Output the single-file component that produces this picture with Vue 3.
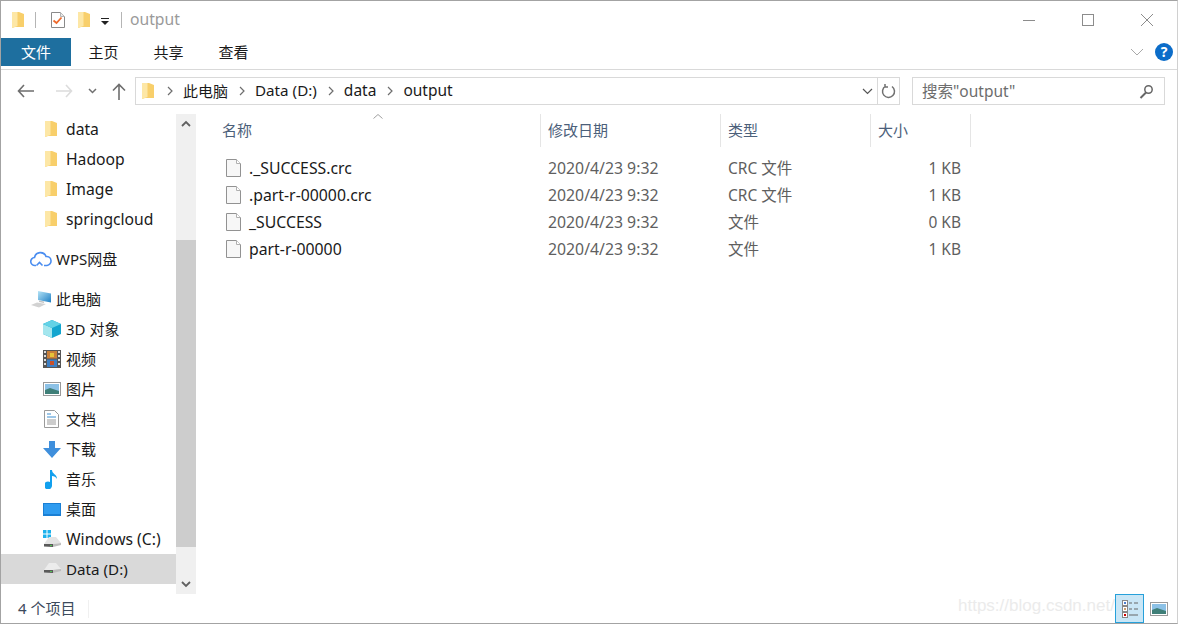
<script setup>
const navTop = ["data", "Hadoop", "Image", "springcloud"]
const places = [
  { name: "3D 对象", icon: "cube", cls: "mixed" },
  { name: "视频", icon: "film", cls: "cjk" },
  { name: "图片", icon: "picture", cls: "cjk" },
  { name: "文档", icon: "doc", cls: "cjk" },
  { name: "下载", icon: "down", cls: "cjk" },
  { name: "音乐", icon: "music", cls: "cjk" },
  { name: "桌面", icon: "desk", cls: "cjk" },
  { name: "Windows (C:)", icon: "winDrive" },
  { name: "Data (D:)", icon: "drive", selected: true, cls: "drive-name" },
]
const files = [
  { name: "._SUCCESS.crc", date: "2020/4/23 9:32", type: "CRC 文件", size: "1 KB" },
  { name: ".part-r-00000.crc", date: "2020/4/23 9:32", type: "CRC 文件", size: "1 KB" },
  { name: "_SUCCESS", date: "2020/4/23 9:32", type: "文件", size: "0 KB" },
  { name: "part-r-00000", date: "2020/4/23 9:32", type: "文件", size: "1 KB" },
]
const crumbs = ["此电脑", "Data (D:)", "data", "output"]
</script>

<template>
  <div class="window">
    <div class="titlebar">
      <svg class="folder" width="14" height="18" viewBox="0 0 14 18"><path d="M1 1h7l5 2v13H4l-3 1z" fill="#f8cf6b" /><path d="M1 1h5.500v14L1 17z" fill="#fde7a6" /></svg>
      <span class="tsep sep1"></span>
      <svg class="check" width="16" height="18" viewBox="0 0 16 18"><path d="M1.500 1.500h9l4 4v11h-13z" fill="#fff" stroke="#8a8a8a" /><path d="M10.500 1.500v4h4" fill="#e8e8e8" stroke="#b5b5b5" /><path d="M3.500 9.500l3 2.500 5-5.500" fill="none" stroke="#ee6a2c" stroke-width="1.800" /></svg>
      <svg class="folder f2" width="14" height="18" viewBox="0 0 14 18"><path d="M1 1h7l5 2v13H4l-3 1z" fill="#f8cf6b" /><path d="M1 1h5.500v14L1 17z" fill="#fde7a6" /></svg>
      <svg class="qat" width="8" height="7" viewBox="0 0 8 7"><path d="M0 0h8v1H0zM0 3h8L4 7z" fill="#222" /></svg>
      <span class="tsep sep2"></span>
      <span class="title">output</span>
      <div class="winbtns">
        <svg width="14" height="14" viewBox="0 0 14 14"><path d="M1 7.500h12" stroke="#8c8c8c" /></svg>
        <svg width="14" height="14" viewBox="0 0 14 14"><rect x="1.500" y="1.500" width="11" height="11" fill="none" stroke="#8c8c8c" /></svg>
        <svg width="14" height="14" viewBox="0 0 14 14"><path d="M1 1l12 12M13 1L1 13" stroke="#8c8c8c" /></svg>
      </div>
    </div>

    <div class="ribbon">
      <div class="tab file-tab">文件</div>
      <div class="tab">主页</div>
      <div class="tab">共享</div>
      <div class="tab">查看</div>
      <div class="ribbon-right">
        <svg width="14" height="8" viewBox="0 0 14 8"><path d="M1 1l6 6 6-6" fill="none" stroke="#a9a9a9" /></svg>
        <span class="help">?</span>
      </div>
    </div>

    <div class="addressrow">
      <div class="navbtns">
        <svg width="18" height="14" viewBox="0 0 18 14"><path d="M7 1L1.500 7 7 13M2 7h15" fill="none" stroke="#6e6e6e" stroke-width="1.600" /></svg>
        <svg width="18" height="14" viewBox="0 0 18 14"><path d="M11 1l5.500 6L11 13M16 7H1" fill="none" stroke="#dcdcdc" stroke-width="1.600" /></svg>
        <svg width="9" height="6" viewBox="0 0 9 6"><path d="M1 1l3.500 3.500L8 1" fill="none" stroke="#707070" stroke-width="1.500" /></svg>
        <svg width="14" height="17" viewBox="0 0 14 17"><path d="M1 7.500L7 1.500l6 6M7 2v15" fill="none" stroke="#6e6e6e" stroke-width="1.600" /></svg>
      </div>
      <div class="addrbox">
        <svg class="addr-folder" width="14" height="18" viewBox="0 0 14 18"><path d="M1 1h7l5 2v13H4l-3 1z" fill="#f8cf6b" /><path d="M1 1h5.500v14L1 17z" fill="#fde7a6" /></svg>
        <template v-for="(c, i) in crumbs" :key="c">
          <svg class="chev" width="6" height="10" viewBox="0 0 6 10"><path d="M1 1l4 4-4 4" fill="none" stroke="#6e6e6e" stroke-width="1.200" /></svg>
          <span class="crumb" :class="{ cjk: i === 0, 'drive-name': i === 1 }">{{ c }}</span>
        </template>
        <span class="addr-spacer"></span>
        <svg class="addr-drop" width="11" height="7" viewBox="0 0 11 7"><path d="M1 1l4.500 4.500L10 1" fill="none" stroke="#555" stroke-width="1.200" /></svg>
        <span class="refresh">
          <svg width="15" height="16" viewBox="0 0 15 16"><path d="M4.500 3.200A6 6 0 1 0 11 3.500M4 1v3h3" fill="none" stroke="#707070" stroke-width="1.500" /></svg>
        </span>
      </div>
      <div class="searchbox">
        <span class="search-text">搜索"output"</span>
        <svg width="15" height="15" viewBox="0 0 15 15"><circle cx="9.500" cy="5.500" r="3.700" fill="none" stroke="#666" stroke-width="1.500" /><path d="M7 8.500L1.500 14" stroke="#666" stroke-width="2" /></svg>
      </div>
    </div>

    <div class="main">
      <div class="sidebar">
        <div class="navlist">
          <div v-for="n in navTop" :key="n" class="navrow indent">
            <svg class="navicon" width="14" height="18" viewBox="0 0 14 18"><path d="M1 1h7l5 2v13H4l-3 1z" fill="#f8cf6b" /><path d="M1 1h5.500v14L1 17z" fill="#fde7a6" /></svg>
            <span>{{ n }}</span>
          </div>
          <div class="navrow group cloud">
            <svg class="groupicon" width="22" height="16" viewBox="0 0 22 16"><path d="M6 14.500H5a4 4 0 0 1-.5-8A6 6 0 0 1 16 5.500a4.500 4.500 0 0 1 1 9h-3M6.500 14.500l3-3 3 3" fill="none" stroke="#4a8df0" stroke-width="1.600" /></svg>
            <span class="mixed">WPS网盘</span>
          </div>
          <div class="navrow group pc">
            <svg class="groupicon" width="22" height="18" viewBox="0 0 22 18">
              <defs>
                <linearGradient id="screen" x1="0" y1="0" x2="1" y2="1">
                  <stop offset="0" stop-color="#b5e4f7" />
                  <stop offset="1" stop-color="#1f7fc4" />
                </linearGradient>
              </defs>
              <path d="M8 1l13 2.500v9L8 10z" fill="url(#screen)" />
              <path d="M9 10.500l5 1v1.500l-5-1z" fill="#c4c4c4" />
              <path d="M1 15l6-2.500 9 1.500-7 3.500z" fill="#d2d2d2" />
            </svg>
            <span class="cjk">此电脑</span>
          </div>
          <div v-for="p in places" :key="p.name" class="navrow indent" :class="{ selected: p.selected }">
            <span class="placeicon">
              <svg v-if="p.icon === 'cube'" width="18" height="18" viewBox="0 0 18 18"><path d="M9 0l9 4v10l-9 4-9-4V4z" fill="#12a5cf" /><path d="M0 4l9 4v10l-9-4z" fill="#a4e6ee" /><path d="M9 0l9 4-9 4-9-4z" fill="#62d2e6" /></svg>
              <svg v-else-if="p.icon === 'film'" width="18" height="18" viewBox="0 0 18 18"><rect width="18" height="18" fill="#555" /><rect x="4" y="1" width="10" height="7.500" fill="#c9803a" /><rect x="4" y="9.500" width="10" height="7.500" fill="#3d7fc4" /><rect x="7" y="3" width="4" height="4" fill="#e6c43a" /><rect x="7" y="11" width="4" height="4" fill="#c8502a" /><path d="M1 2h2M1 6h2M1 10h2M1 14h2M15 2h2M15 6h2M15 10h2M15 14h2" stroke="#ddd" stroke-width="2" /></svg>
              <svg v-else-if="p.icon === 'picture'" width="18" height="14" viewBox="0 0 18 14"><rect x=".5" y=".5" width="17" height="13" fill="#fff" stroke="#9a9a9a" /><rect x="2" y="2" width="14" height="10" fill="#8cc1e6" /><path d="M2 8l5-2 9 3v3H2z" fill="#3f7f78" /></svg>
              <svg v-else-if="p.icon === 'doc'" width="15" height="18" viewBox="0 0 15 18"><path d="M.5.5h10l4 4v13H.5z" fill="#fff" stroke="#9a9a9a" /><path d="M3 4h4M3 7h9" stroke="#3c8fd0" /><path d="M3 10h9M3 12h9M3 14h9" stroke="#9a9a9a" /></svg>
              <svg v-else-if="p.icon === 'down'" width="18" height="17" viewBox="0 0 18 17"><path d="M6 0h6v7h6l-9 10L0 7h6z" fill="#3f8fdc" /></svg>
              <svg v-else-if="p.icon === 'music'" width="13" height="19" viewBox="0 0 13 19"><path d="M5 0h2c0 4 5 4 5 9-1-2-3-3-5-3v9a4 4 0 1 1-2-3z" fill="#12a0ee" /></svg>
              <svg v-else-if="p.icon === 'desk'" width="18" height="13" viewBox="0 0 18 13"><rect width="18" height="13" fill="#1a7fd4" /><rect x="1" y="1" width="16" height="10" fill="#2f9cf0" /></svg>
              <svg v-else-if="p.icon === 'winDrive'" width="20" height="20" viewBox="0 0 20 20"><path d="M1 1h3.500v3.500H1zM5.500 1H9v3.500H5.500zM1 5.500h3.500V9H1zM5.500 5.500H9V9H5.500z" fill="#1cb1ec" /><path d="M2 15l5-7h7l5 6-8 1z" fill="#e4e4e4" /><path d="M2 15l9 0v3l-9-.5z" fill="#5a5a5a" /><path d="M11 15l8-1v2l-8 2z" fill="#bdbdbd" /><rect x="8" y="16" width="2" height="1" fill="#4ec24e" /></svg>
              <svg v-else width="20" height="14" viewBox="0 0 20 14"><path d="M2 8l5-7h7l5 6-8 1z" fill="#ececec" /><path d="M2 8l9 0v3l-9-.5z" fill="#5a5a5a" /><path d="M11 8l8-1v2l-8 2z" fill="#bdbdbd" /><rect x="8" y="9" width="2" height="1" fill="#4ec24e" /></svg>
            </span>
            <span :class="p.cls">{{ p.name }}</span>
          </div>
        </div>
        <div class="scrollbar">
          <svg class="arrow" width="10" height="7" viewBox="0 0 10 7"><path d="M1 6l4-4 4 4" fill="none" stroke="#606060" stroke-width="1.800" /></svg>
          <div class="track"><div class="thumb"></div></div>
          <svg class="arrow" width="10" height="7" viewBox="0 0 10 7"><path d="M1 1l4 4 4-4" fill="none" stroke="#606060" stroke-width="1.800" /></svg>
        </div>
      </div>

      <div class="content">
        <div class="thead">
          <svg class="sort" width="10" height="5" viewBox="0 0 10 5"><path d="M.5 4.500L5 .5l4.500 4" fill="none" stroke="#a0a0a0" /></svg>
          <div class="th name">名称</div>
          <div class="th date">修改日期</div>
          <div class="th type">类型</div>
          <div class="th size">大小</div>
        </div>
        <div class="tbody">
          <div v-for="f in files" :key="f.name" class="trow">
            <div class="td name">
              <svg width="15" height="18" viewBox="0 0 15 18"><path d="M.5.5h10l4 4v13H.5z" fill="#f7f7f7" stroke="#929292" /><path d="M10.500.5v4h4" fill="#fff" stroke="#b0b0b0" /></svg>
              <span>{{ f.name }}</span>
            </div>
            <div class="td date">{{ f.date }}</div>
            <div class="td type">{{ f.type }}</div>
            <div class="td size">{{ f.size }}</div>
          </div>
        </div>
      </div>
    </div>

    <div class="statusbar">
      <span class="count">4 个项目</span>
      <span class="status-sep"></span>
      <span class="watermark">https://blog.csdn.net/B</span>
      <div class="views">
        <span class="viewbtn active">
          <svg width="18" height="20" viewBox="0 0 18 20"><rect x="1.500" y="1.500" width="5" height="5" fill="#fff" stroke="#888" /><rect x="3" y="3" width="2" height="2" fill="#4a7fd0" /><rect x="1.500" y="7.500" width="5" height="5" fill="#fff" stroke="#888" /><rect x="3" y="9" width="2" height="2" fill="#c9a070" /><rect x="1.500" y="13.500" width="5" height="5" fill="#fff" stroke="#888" /><rect x="3" y="15" width="2" height="2" fill="#c00" /><path d="M8 4h3M13 4h4M8 10h3M13 10h4M8 16h9" stroke="#666" /></svg>
        </span>
        <span class="viewbtn">
          <svg width="18" height="14" viewBox="0 0 18 14"><rect x=".5" y=".5" width="17" height="13" fill="#fff" stroke="#9a9a9a" /><rect x="2" y="2" width="14" height="10" fill="#8cc1e6" /><path d="M2 8l5-2 9 3v3H2z" fill="#3f7f78" /></svg>
        </span>
      </div>
    </div>
  </div>
</template>

<style scoped>
.window {
  width: 1178px;
  height: 624px;
  box-sizing: border-box;
  border: 1px solid #a3a3a3;
  border-right-color: #d0d0d0;
  background: #fff;
  font-family: "Noto Sans", "Noto Sans CJK SC", sans-serif;
  font-size: 15.700px;
  color: #1a1a1a;
  display: flex;
  flex-direction: column;
  overflow: hidden;
  position: relative;
}
.cjk {
  font-size: 15px;
  position: relative;
  top: -1px;
}
.mixed {
  font-size: 15px;
  position: relative;
  top: -1px;
}
.drive-name {
  font-size: 15.200px;
}
.titlebar {
  height: 37px;
  display: flex;
  align-items: center;
  flex: none;
}
.folder {
  margin-left: 10px;
}
.tsep {
  width: 1px;
  height: 16px;
  background: #b5b5b5;
}
.sep1 {
  margin-left: 10px;
}
.check {
  margin-left: 14px;
}
.f2 {
  margin-left: 11px;
}
.qat {
  margin-left: 10px;
  margin-top: 3px;
}
.sep2 {
  margin-left: 12px;
}
.title {
  margin-left: 8px;
  color: #9a9a9a;
  position: relative;
  top: -1px;
}
.winbtns {
  margin-left: auto;
  display: flex;
  gap: 45px;
  margin-right: 23px;
}
.ribbon {
  height: 32px;
  flex: none;
  display: flex;
  align-items: flex-start;
  border-bottom: 1px solid #d9d9d9;
  box-sizing: border-box;
}
.tab {
  width: 65px;
  height: 28px;
  line-height: 29px;
  text-align: center;
  font-size: 15px;
}
.file-tab {
  width: 70px;
  background: #1e6f9f;
  color: #fff;
}
.ribbon-right {
  margin-left: auto;
  display: flex;
  align-items: center;
  gap: 11px;
  height: 28px;
  margin-right: 4px;
}
.help {
  width: 18px;
  height: 18px;
  border-radius: 50%;
  background: #0c6dc9;
  color: #fff;
  font-size: 14px;
  font-weight: 700;
  text-align: center;
  line-height: 18px;
}
.addressrow {
  height: 40px;
  flex: none;
  display: flex;
  align-items: center;
  padding-top: 2px;
  box-sizing: border-box;
}
.navbtns {
  width: 134px;
  display: flex;
  align-items: center;
  padding-left: 16px;
  box-sizing: border-box;
  flex: none;
}
.navbtns svg:nth-child(2) {
  margin-left: 20px;
}
.navbtns svg:nth-child(3) {
  margin-left: 15px;
}
.navbtns svg:nth-child(4) {
  margin-left: 15px;
}
.addrbox {
  width: 765px;
  height: 28px;
  box-sizing: border-box;
  border: 1px solid #d9d9d9;
  display: flex;
  align-items: center;
  flex: none;
  padding-left: 5px;
}
.chev {
  margin-left: 11px;
}
.addr-folder + .chev {
  margin-left: 12px;
}
.crumb {
  margin-left: 10px;
  font-size: 15.500px;
  position: relative;
  top: -1px;
}
.crumb.cjk {
  font-size: 15px;
}
.crumb.drive-name {
  font-size: 15.200px;
}
.addr-spacer {
  flex: 1;
}
.addr-drop {
  margin-right: 4px;
}
.refresh {
  width: 21px;
  height: 26px;
  border-left: 1px solid #d9d9d9;
  display: flex;
  align-items: center;
  justify-content: center;
}
.searchbox {
  width: 253px;
  height: 28px;
  margin-left: 12px;
  box-sizing: border-box;
  border: 1px solid #d9d9d9;
  display: flex;
  align-items: center;
  justify-content: space-between;
  padding: 0 10px 0 9px;
  color: #6d6d6d;
  font-size: 15.500px;
  flex: none;
}
.search-text {
  position: relative;
  top: -1px;
}
.main {
  flex: 1;
  min-height: 0;
  display: flex;
  padding-top: 4px;
}
.sidebar {
  width: 195px;
  flex: none;
  display: flex;
}
.navlist {
  width: 175px;
  flex: none;
}
.navrow {
  height: 30px;
  display: flex;
  align-items: center;
  white-space: nowrap;
}
.indent {
  padding-left: 65px;
  position: relative;
}
.navicon {
  position: absolute;
  left: 43px;
  top: 6px;
}
.placeicon {
  position: absolute;
  left: 40px;
  top: 0;
  height: 30px;
  width: 21px;
  display: flex;
  align-items: center;
  justify-content: center;
}
.group {
  padding-left: 29px;
  gap: 4px;
}
.cloud {
  margin-top: 10px;
}
.pc {
  margin-top: 10px;
}
.selected {
  background: #d9d9d9;
}
.scrollbar {
  width: 20px;
  height: 480px;
  background: #f0f0f0;
  display: flex;
  flex-direction: column;
  align-items: center;
  flex: none;
}
.arrow {
  flex: none;
  margin: 6px 0;
}
.track {
  flex: 1;
  width: 100%;
  padding-top: 107px;
  padding-bottom: 28px;
  box-sizing: border-box;
  display: flex;
}
.thumb {
  flex: 1;
  background: #cdcdcd;
}
.content {
  flex: 1;
  min-width: 0;
}
.thead {
  height: 33px;
  display: flex;
  margin-left: 19px;
  position: relative;
  color: #4c607a;
  font-size: 15px;
}
.sort {
  position: absolute;
  left: 158px;
  top: 0;
}
.th {
  height: 33px;
  line-height: 32px;
  box-sizing: border-box;
  padding-left: 7px;
  border-right: 1px solid #e5e5e5;
}
.th.name {
  width: 326px;
}
.th.date {
  width: 180px;
}
.th.type {
  width: 150px;
}
.th.size {
  width: 100px;
}
.tbody {
  margin-top: 7px;
  margin-left: 19px;
}
.trow {
  height: 27px;
  display: flex;
  align-items: center;
}
.td {
  box-sizing: border-box;
  padding-left: 7px;
  color: #5f5f5f;
  font-size: 15.500px;
}
.td.name {
  width: 326px;
  display: flex;
  align-items: center;
  gap: 8px;
  padding-left: 11px;
  color: #1a1a1a;
  font-size: 15.800px;
}
.td.date {
  width: 180px;
  font-size: 15.800px;
}
.td.type {
  width: 150px;
}
.td.size {
  width: 100px;
  text-align: right;
  padding-right: 10px;
}
.statusbar {
  height: 29px;
  flex: none;
  display: flex;
  align-items: center;
  position: relative;
  color: #3c4a5c;
  font-size: 15px;
}
.count {
  margin-left: 17px;
  position: relative;
  top: -1px;
}
.status-sep {
  width: 1px;
  height: 18px;
  background: #f0f0f0;
  margin-left: 13px;
}
.watermark {
  position: absolute;
  left: 957px;
  top: 2px;
  font-family: "Liberation Sans", sans-serif;
  font-size: 17px;
  color: #ebebeb;
  white-space: nowrap;
}
.views {
  margin-left: auto;
  display: flex;
  margin-right: 4px;
  position: relative;
}
.viewbtn {
  width: 29px;
  height: 29px;
  box-sizing: border-box;
  display: flex;
  align-items: center;
  justify-content: center;
}
.viewbtn.active {
  background: #c9e6f6;
  border: 1px solid #26a0da;
}
</style>
